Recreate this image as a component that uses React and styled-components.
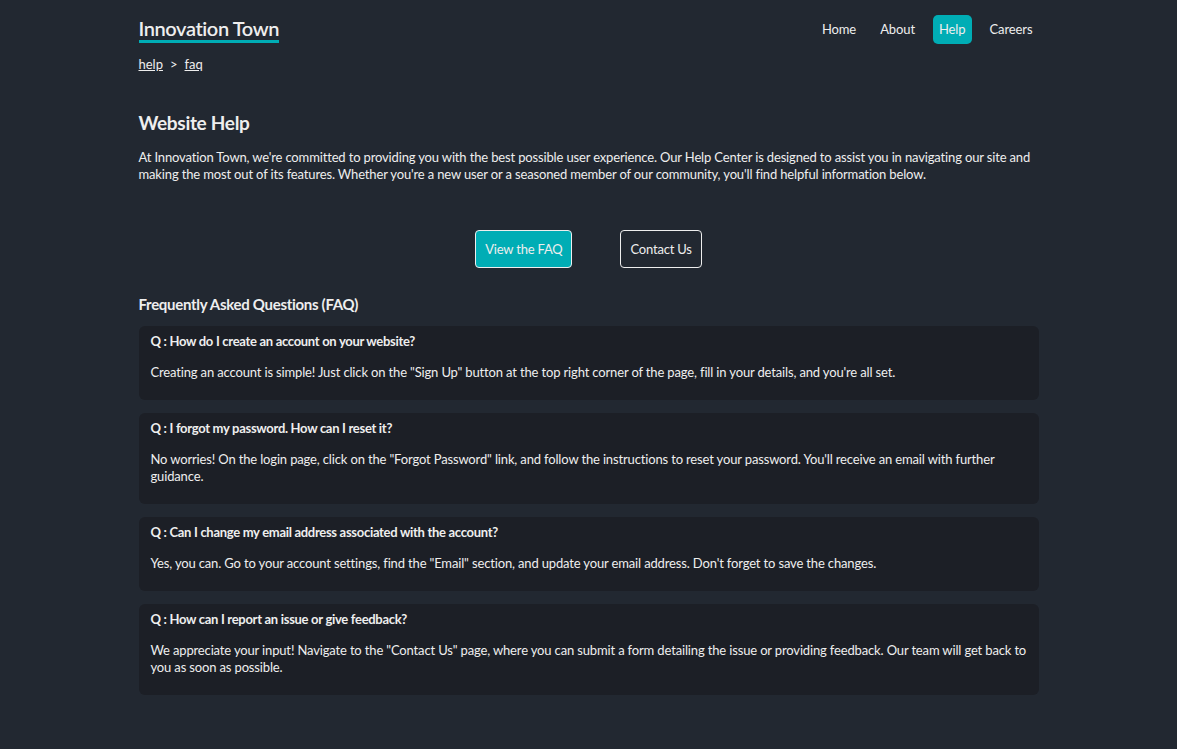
import React from "react";
import styled, { createGlobalStyle } from "styled-components";

const GlobalStyle = createGlobalStyle`
  body {
    margin: 0;
    background: #222831;
    color: #eeeeee;
    font-family: Lato, "Noto Sans", sans-serif;
  }
`;

const Page = styled.div`
  width: 900px;
  margin: 0 auto;
  padding-bottom: 40px;
`;

const Header = styled.header`
  display: flex;
  justify-content: space-between;
  align-items: center;
  padding-top: 15px;
`;

const Logo = styled.h1`
  margin: 0;
  font-size: 20px;
  font-weight: 600;
  line-height: 24px;
  letter-spacing: -0.4px;
  border-bottom: 3px solid #00adb5;
`;

const Nav = styled.nav`
  display: flex;
  gap: 12px;
`;

const NavLink = styled.a`
  padding: 6px;
  font-size: 13px;
  line-height: 17px;
  letter-spacing: -0.1px;
  color: #eeeeee;
  text-decoration: none;
  border-radius: 5px;
  background: ${(p) => (p.$active ? "#00adb5" : "transparent")};
`;

const Crumbs = styled.div`
  margin-top: 12px;
  font-size: 13px;
  line-height: 17px;
  display: flex;
  gap: 7px;

  a {
    color: #eeeeee;
  }
`;

const Title = styled.h2`
  margin: 38px 0 0;
  font-size: 19px;
  font-weight: 700;
  line-height: 24px;
  letter-spacing: -0.3px;
`;

const Intro = styled.p`
  margin: 14px 0 0;
  font-size: 13px;
  line-height: 17px;
  letter-spacing: -0.15px;
`;

const Actions = styled.div`
  display: flex;
  justify-content: center;
  gap: 48px;
  margin-top: 47px;
`;

const Button = styled.a`
  display: block;
  padding: 10px 9px;
  font-size: 13px;
  line-height: 16px;
  letter-spacing: -0.2px;
  color: #eeeeee;
  text-decoration: none;
  border: 1px solid #eeeeee;
  border-radius: 4px;
  background: ${(p) => (p.$primary ? "#00adb5" : "transparent")};
`;

const FaqTitle = styled.h3`
  margin: 26px 0 0;
  font-size: 15px;
  font-weight: 700;
  line-height: 20px;
  letter-spacing: -0.3px;
`;

const FaqList = styled.div`
  display: flex;
  flex-direction: column;
  gap: 13px;
  margin-top: 12px;
`;

const Card = styled.div`
  background: #1c1f26;
  border-radius: 6px;
  padding: 6px 12px 0;
`;

const Question = styled.h4`
  margin: 0;
  font-size: 13px;
  font-weight: 700;
  line-height: 18px;
  letter-spacing: -0.3px;
`;

const Answer = styled.p`
  margin: 14px 0 19px;
  font-size: 13px;
  line-height: 17px;
  letter-spacing: -0.15px;
`;

const faqs = [
  {
    q: "How do I create an account on your website?",
    a: 'Creating an account is simple! Just click on the "Sign Up" button at the top right corner of the page, fill in your details, and you\'re all set.',
  },
  {
    q: "I forgot my password. How can I reset it?",
    a: 'No worries! On the login page, click on the "Forgot Password" link, and follow the instructions to reset your password. You\'ll receive an email with further guidance.',
  },
  {
    q: "Can I change my email address associated with the account?",
    a: 'Yes, you can. Go to your account settings, find the "Email" section, and update your email address. Don\'t forget to save the changes.',
  },
  {
    q: "How can I report an issue or give feedback?",
    a: 'We appreciate your input! Navigate to the "Contact Us" page, where you can submit a form detailing the issue or providing feedback. Our team will get back to you as soon as possible.',
  },
];

export default function App() {
  return (
    <>
      <GlobalStyle />
      <Page>
        <Header>
          <Logo>Innovation Town</Logo>
          <Nav>
            <NavLink href="#">Home</NavLink>
            <NavLink href="#">About</NavLink>
            <NavLink href="#" $active>
              Help
            </NavLink>
            <NavLink href="#">Careers</NavLink>
          </Nav>
        </Header>
        <Crumbs>
          <a href="#">help</a>
          <span>&gt;</span>
          <a href="#">faq</a>
        </Crumbs>
        <Title>Website Help</Title>
        <Intro>
          At Innovation Town, we're committed to providing you with the best possible user
          experience. Our Help Center is designed to assist you in navigating our site and
          making the most out of its features. Whether you're a new user or a seasoned member
          of our community, you'll find helpful information below.
        </Intro>
        <Actions>
          <Button href="#" $primary>
            View the FAQ
          </Button>
          <Button href="#">Contact Us</Button>
        </Actions>
        <FaqTitle>Frequently Asked Questions (FAQ)</FaqTitle>
        <FaqList>
          {faqs.map((f) => (
            <Card key={f.q}>
              <Question>Q : {f.q}</Question>
              <Answer>{f.a}</Answer>
            </Card>
          ))}
        </FaqList>
      </Page>
    </>
  );
}
